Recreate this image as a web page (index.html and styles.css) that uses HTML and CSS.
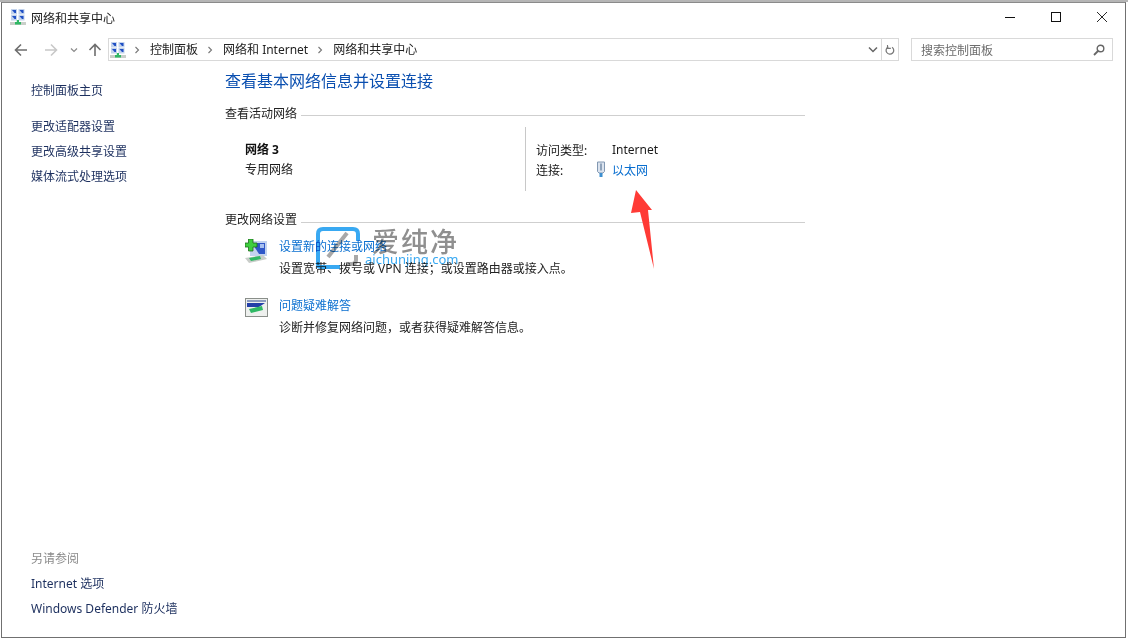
FILE: index.html
```html
<!DOCTYPE html>
<html lang="zh-CN">
<head>
<meta charset="utf-8">
<title>网络和共享中心</title>
<link rel="stylesheet" href="styles.css">
</head>
<body>
<svg class="defs" width="0" height="0" aria-hidden="true">
  <defs>
    <symbol id="net" viewBox="0 0 16 16">
      <rect x="1" y="0" width="6" height="5.5" fill="#c3d3ec"/>
      <rect x="8.5" y="0" width="6" height="5.5" fill="#c3d3ec"/>
      <path d="M2 1H6V4H4.5Z" fill="#1f4fc4"/>
      <path d="M9.5 1H13.5V4H12Z" fill="#1f4fc4"/>
      <rect x="1" y="6" width="6" height="5.5" fill="#c3d3ec"/>
      <rect x="8.5" y="6" width="6" height="5.5" fill="#c3d3ec"/>
      <path d="M2 7H6V10H4.5Z" fill="#1f4fc4"/>
      <path d="M9.5 7H13.5V10H12Z" fill="#1f4fc4"/>
      <rect x="0" y="13" width="16" height="3" fill="#c9cfc9"/>
      <rect x="5" y="13" width="6" height="2.5" fill="#2fb864"/>
      <rect x="6.8" y="11" width="2.2" height="3" fill="#2fb864"/>
    </symbol>
  </defs>
</svg>
<div class="window">
  <header class="titlebar">
    <svg class="ic16 title-ic"><use href="#net"/></svg>
    <span class="title">网络和共享中心</span>
    <div class="winbtns">
      <svg class="winbtn" viewBox="0 0 10 10"><path d="M0 5.5H10" stroke="#111" fill="none"/></svg>
      <svg class="winbtn" viewBox="0 0 10 10"><rect x=".5" y=".5" width="9" height="9" stroke="#111" fill="none"/></svg>
      <svg class="winbtn" viewBox="0 0 10 10"><path d="M0 0L10 10M10 0L0 10" stroke="#111" fill="none" stroke-width=".9"/></svg>
    </div>
  </header>
  <div class="toolbar">
    <div class="navs">
      <svg class="nav nav-back" viewBox="0 0 14 14"><path d="M13 7H2M7 1.5L1.5 7L7 12.5" stroke="#6e6e6e" stroke-width="1.6" fill="none"/></svg>
      <svg class="nav nav-fwd" viewBox="0 0 14 14"><path d="M1 7H12M7 1.5L12.5 7L7 12.5" stroke="#c8c8c8" stroke-width="1.6" fill="none"/></svg>
      <svg class="nav-drop" viewBox="0 0 8 6"><path d="M1 1.5L4 4.5L7 1.5" stroke="#8a8a8a" stroke-width="1.2" fill="none"/></svg>
      <svg class="nav nav-up" viewBox="0 0 14 14"><path d="M7 13V2M1.5 7L7 1.5L12.5 7" stroke="#6e6e6e" stroke-width="1.6" fill="none"/></svg>
    </div>
    <div class="address">
      <svg class="ic16"><use href="#net"/></svg>
      <svg class="crumb-sep sep-first" viewBox="0 0 6 8"><path d="M1.5 1L4.5 4L1.5 7" stroke="#777" stroke-width="1.1" fill="none"/></svg>
      <span class="crumb">控制面板</span>
      <svg class="crumb-sep" viewBox="0 0 6 8"><path d="M1.5 1L4.5 4L1.5 7" stroke="#777" stroke-width="1.1" fill="none"/></svg>
      <span class="crumb">网络和 Internet</span>
      <svg class="crumb-sep" viewBox="0 0 6 8"><path d="M1.5 1L4.5 4L1.5 7" stroke="#777" stroke-width="1.1" fill="none"/></svg>
      <span class="crumb">网络和共享中心</span>
      <svg class="addr-drop" viewBox="0 0 10 7"><path d="M1 1.5L5 5.5L9 1.5" stroke="#666" stroke-width="1.5" fill="none"/></svg>
      <div class="refresh">
        <svg viewBox="0 0 12 14" width="10" height="12"><path d="M4 3.2A4.6 4.6 0 1 0 8.5 3.6" stroke="#777" stroke-width="1.5" fill="none"/><path d="M3 1V5H7" stroke="#777" stroke-width="1.3" fill="none"/></svg>
      </div>
    </div>
    <div class="search">
      <span>搜索控制面板</span>
      <svg viewBox="0 0 12 12" width="12" height="12"><circle cx="7.5" cy="4.5" r="3.3" stroke="#666" stroke-width="1.4" fill="none"/><path d="M5 7L1 11" stroke="#666" stroke-width="1.8"/></svg>
    </div>
  </div>
  <div class="main">
    <aside class="side">
      <nav class="side-top">
        <a class="side-home">控制面板主页</a>
        <a>更改适配器设置</a>
        <a>更改高级共享设置</a>
        <a>媒体流式处理选项</a>
      </nav>
      <nav class="side-bottom">
        <span class="side-cap">另请参阅</span>
        <a>Internet 选项</a>
        <a>Windows Defender 防火墙</a>
      </nav>
    </aside>
    <section class="content">
      <h1>查看基本网络信息并设置连接</h1>
      <div class="sec-head"><span>查看活动网络</span><i></i></div>
      <div class="active">
        <div class="active-name">
          <b>网络 3</b>
          <span>专用网络</span>
        </div>
        <div class="active-info">
          <div class="info-row"><span class="lbl">访问类型:</span><span class="val">Internet</span></div>
          <div class="info-row"><span class="lbl">连接:</span>
            <svg class="eth" viewBox="0 0 10 17"><path d="M1.5 1H8.5V10.5L7 12H3L1.5 10.5Z" fill="#dbe3ee" stroke="#8298b2"/><rect x="4" y="2.5" width="2" height="7" fill="#8fa3ba"/><rect x="3.5" y="12" width="3" height="4" fill="#3d8fd0"/></svg>
            <a class="val link">以太网</a></div>
        </div>
      </div>
      <div class="sec-head change"><span>更改网络设置</span><i></i></div>
      <div class="task first-task">
        <svg class="task-ic" viewBox="0 0 24 24">
          <rect x="5" y="2" width="17" height="15" fill="#c3d3ef"/>
          <path d="M7 4H20V15H14Z" fill="#2f57c8"/>
          <rect x="15" y="5" width="4" height="4" fill="#a8c0f0"/>
          <path d="M0 19L18 16L22 20L4 24Z" fill="#c9cdc9"/>
          <path d="M4 19L15 17L16 20L6 22Z" fill="#2fb864"/>
          <path d="M3.5 0H8V4H12V8H8V12H3.5V8H0V4H3.5Z" fill="#3fce3f" stroke="#1c6d1c" stroke-width=".8"/>
        </svg>
        <div class="task-txt"><a class="link">设置新的连接或网络</a><p>设置宽带、拨号或 VPN 连接；或设置路由器或接入点。</p></div>
      </div>
      <div class="task">
        <svg class="task-ic" viewBox="0 0 24 24">
          <rect x="0.5" y="0.5" width="22" height="18" fill="#eef0ee" stroke="#8a8f8a"/>
          <rect x="2" y="2" width="19" height="2" fill="#8c9cc0"/>
          <path d="M2 5H20L14 9H2Z" fill="#233fa8"/>
          <path d="M4 11L17 8L18 12L6 15Z" fill="#2fb864"/>
        </svg>
        <div class="task-txt"><a class="link">问题疑难解答</a><p>诊断并修复网络问题，或者获得疑难解答信息。</p></div>
      </div>
    </section>
  </div>
  <svg class="arrow" viewBox="0 0 28 85"><path d="M7 3L23 23L19 23L25 82L11 25L2 26Z" fill="#ff3b36"/></svg>
  <div class="watermark">
    <svg class="wm-logo" viewBox="0 0 44 42"><path d="M2 38V7Q2 2 7 2H37Q42 2 42 7V14" stroke="#39a9f2" stroke-width="4" fill="none"/><path d="M2 38Q2 40 5 40H24" stroke="#39a9f2" stroke-width="4" fill="none"/><path d="M12 30L31 6" stroke="#a8a8a8" stroke-width="4" fill="none"/><path d="M40 28V33Q40 37 36 37H31" stroke="#a8a8a8" stroke-width="4" fill="none"/></svg>
    <div class="wm-text"><span class="wm-cn">爱纯净</span><span class="wm-en">aichunjing.com</span></div>
  </div>
</div>
</body>
</html>
```
FILE: styles.css
```css
* { box-sizing: border-box; }
html, body { margin: 0; padding: 0; height: 100%; overflow: hidden; }
body { font-family: "Noto Sans", "Noto Sans CJK SC", sans-serif; font-size: 12px; color: #1a1a1a; padding-top: 2px; background: linear-gradient(#b5b5b5, #b5b5b5) top/100% 2px no-repeat #fff; }
.defs { position: absolute; }
.window { position: relative; width: 1125px; height: 636px; margin-left: 1px; border: 1px solid #707070; border-top-color: #8a8a8a; background: #fff; display: flex; flex-direction: column; }
.ic16 { width: 16px; height: 16px; flex: none; }
.titlebar { height: 30px; display: flex; align-items: center; padding-left: 8px; flex: none; }
.title-ic { margin-top: -2px; }
.title { margin-left: 5px; font-size: 12px; color: #222; }
.winbtns { margin-left: auto; margin-top: -2px; display: flex; align-items: center; padding-right: 18px; gap: 36px; }
.winbtn { width: 10px; height: 10px; display: block; }
.toolbar { height: 23px; display: flex; margin-top: 5px; flex: none; }
.navs { width: 106px; display: flex; align-items: center; padding-left: 12px; flex: none; }
.nav { width: 14px; height: 14px; }
.nav-fwd { margin-left: 16px; }
.nav-drop { width: 8px; height: 6px; margin-left: 12px; }
.nav-up { margin-left: 10px; }
.address { width: 791px; border: 1px solid #d9d9d9; display: flex; align-items: center; padding-left: 1px; flex: none; }
.crumb-sep { width: 6px; height: 8px; margin: 0 10px 0 9px; flex: none; }
.crumb-sep.sep-first { margin-left: 8px; }
.crumb { font-size: 12px; color: #222; line-height: 1; white-space: nowrap; }
.addr-drop { width: 10px; height: 7px; margin-left: auto; margin-right: 3px; }
.refresh { width: 17px; align-self: stretch; border-left: 1px solid #d9d9d9; display: flex; align-items: center; justify-content: center; }
.search { width: 202px; margin-left: 12px; border: 1px solid #d9d9d9; display: flex; align-items: center; justify-content: space-between; padding: 0 7px 0 9px; color: #6d6d6d; flex: none; }
.main { flex: 1; display: flex; min-height: 0; }
.side { width: 223px; flex: none; padding: 0 0 16px 29px; display: flex; flex-direction: column; justify-content: space-between; }
.side a, .side-cap { display: block; height: 25px; line-height: 25px; font-size: 12px; color: #1c2f5e; white-space: nowrap; }
.side-top { padding-top: 17px; }
.side-home { margin-bottom: 11px; }
.side-cap { color: #8a8a8a; }
.content { flex: 1; }
h1 { margin: 8px 0 0; font-weight: 400; font-size: 16px; line-height: 24px; height: 24px; color: #0a4fb0; }
.sec-head { display: flex; align-items: center; width: 580px; height: 20px; margin-top: 10px; font-size: 12px; color: #222; }
.sec-head i { flex: 1; height: 1px; background: #cfcfcf; margin-left: 4px; margin-top: 4px; }
.active { display: flex; width: 580px; height: 64px; margin-top: 4px; }
.active-name { width: 301px; padding: 14px 0 0 20px; border-right: 1px solid #c8c8c8; display: flex; flex-direction: column; gap: 3px; line-height: 17px; flex: none; }
.active-name b { font-weight: 700; color: #111; }
.active-info { padding: 14px 0 0 10px; display: flex; flex-direction: column; gap: 3px; }
.info-row { display: flex; align-items: center; height: 17px; position: relative; }
.lbl { width: 76px; flex: none; }
.link { color: #0a6fd0; }
.eth { position: absolute; left: 60px; top: 0; width: 10px; height: 17px; }
.change { margin-top: 18px; }
.change i { margin-top: 6px; }
.task { display: flex; margin-left: 20px; }
.first-task { margin-top: 8px; }
.task + .task { margin-top: 17px; }
.task-ic { width: 24px; height: 24px; flex: none; margin-top: 2px; }
.task-txt { margin-left: 10px; line-height: 20px; }
.task-txt a { display: block; }
.task-txt p { margin: 2px 0 0; color: #222; }
.arrow { position: absolute; left: 627px; top: 184px; width: 28px; height: 85px; }
.watermark { position: absolute; left: 314px; top: 224px; display: flex; pointer-events: none; mix-blend-mode: multiply; }
.wm-logo { width: 44px; height: 42px; flex: none; }
.wm-text { margin-left: 12px; display: flex; flex-direction: column; }
.wm-cn { font-size: 27px; line-height: 30px; letter-spacing: 2px; margin-top: 0; font-weight: 500; color: #8f8f8f; white-space: nowrap; }
.wm-en { font-size: 13px; line-height: 14px; color: #39a9f2; margin-left: -7px; margin-top: -5px; white-space: nowrap; }
```
